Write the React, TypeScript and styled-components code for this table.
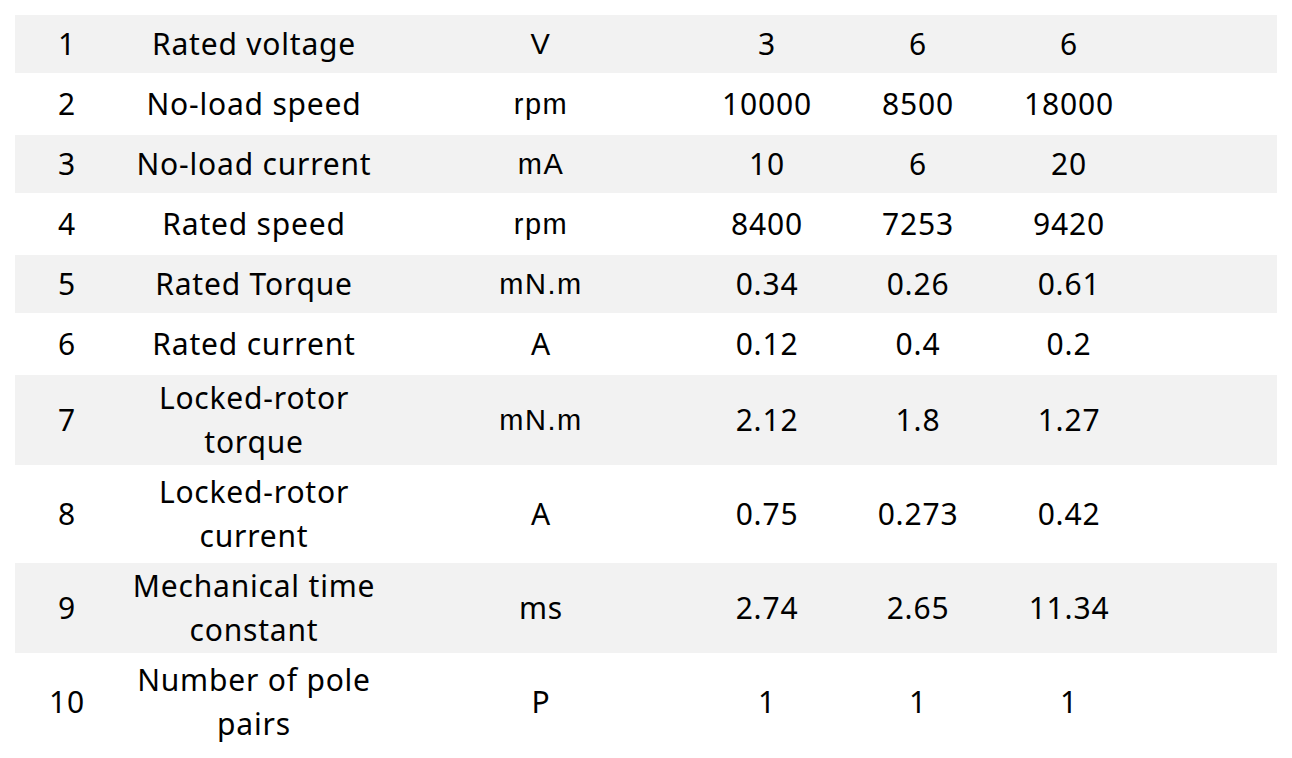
import React from "react";
import styled, { createGlobalStyle } from "styled-components";

const Global = createGlobalStyle`
  html, body { margin: 0; padding: 0; background: #ffffff; }
  body { font-family: "Noto Sans", "Open Sans", sans-serif; color: #000; }
`;

const Page = styled.div`
  padding: 15px 15px 0 15px;
  width: 1262px;
`;

const Table = styled.div`
  display: flex;
  flex-direction: column;
  gap: 2px;
`;

const Row = styled.div<{ $shade: boolean; $h: number }>`
  display: grid;
  grid-template-columns: 104px 270px 304px 148px 154px 148px 1fr;
  height: ${(p) => p.$h}px;
  background: ${(p) => (p.$shade ? "#f2f2f2" : "#ffffff")};
  align-items: center;
`;

const Cell = styled.div`
  text-align: center;
  font-family: "Noto Sans", "Open Sans", sans-serif;
  font-size: 30px;
  letter-spacing: 0.8px;
  line-height: 44px;
  padding: 0 2px;
`;

const UnitCell = styled(Cell)<{ $latin: boolean }>`
  font-family: ${(p) =>
    p.$latin ? '"Liberation Sans", Arial, sans-serif' : '"Noto Sans", "Open Sans", sans-serif'};
  font-size: ${(p) => (p.$latin ? "29px" : "30px")};
  letter-spacing: ${(p) => (p.$latin ? "1.5px" : "0.8px")};
`;

type R = { n: string; name: string; unit: string; latin: boolean; a: string; b: string; c: string; h: number };

const rows: R[] = [
  { n: "1", name: "Rated voltage", unit: "V", latin: true, a: "3", b: "6", c: "6", h: 58 },
  { n: "2", name: "No-load speed", unit: "rpm", latin: true, a: "10000", b: "8500", c: "18000", h: 58 },
  { n: "3", name: "No-load current", unit: "mA", latin: true, a: "10", b: "6", c: "20", h: 58 },
  { n: "4", name: "Rated speed", unit: "rpm", latin: true, a: "8400", b: "7253", c: "9420", h: 58 },
  { n: "5", name: "Rated Torque", unit: "mN.m", latin: true, a: "0.34", b: "0.26", c: "0.61", h: 58 },
  { n: "6", name: "Rated current", unit: "A", latin: false, a: "0.12", b: "0.4", c: "0.2", h: 58 },
  { n: "7", name: "Locked-rotor torque", unit: "mN.m", latin: true, a: "2.12", b: "1.8", c: "1.27", h: 90 },
  { n: "8", name: "Locked-rotor current", unit: "A", latin: false, a: "0.75", b: "0.273", c: "0.42", h: 94 },
  { n: "9", name: "Mechanical time constant", unit: "ms", latin: false, a: "2.74", b: "2.65", c: "11.34", h: 90 },
  { n: "10", name: "Number of pole pairs", unit: "P", latin: false, a: "1", b: "1", c: "1", h: 94 },
];

export default function App() {
  return (
    <Page>
      <Global />
      <Table>
        {rows.map((r, i) => (
          <Row key={r.n} $shade={i % 2 === 0} $h={r.h}>
            <Cell>{r.n}</Cell>
            <Cell>{r.name}</Cell>
            <UnitCell $latin={r.latin}>{r.unit}</UnitCell>
            <Cell>{r.a}</Cell>
            <Cell>{r.b}</Cell>
            <Cell>{r.c}</Cell>
            <Cell />
          </Row>
        ))}
      </Table>
    </Page>
  );
}
